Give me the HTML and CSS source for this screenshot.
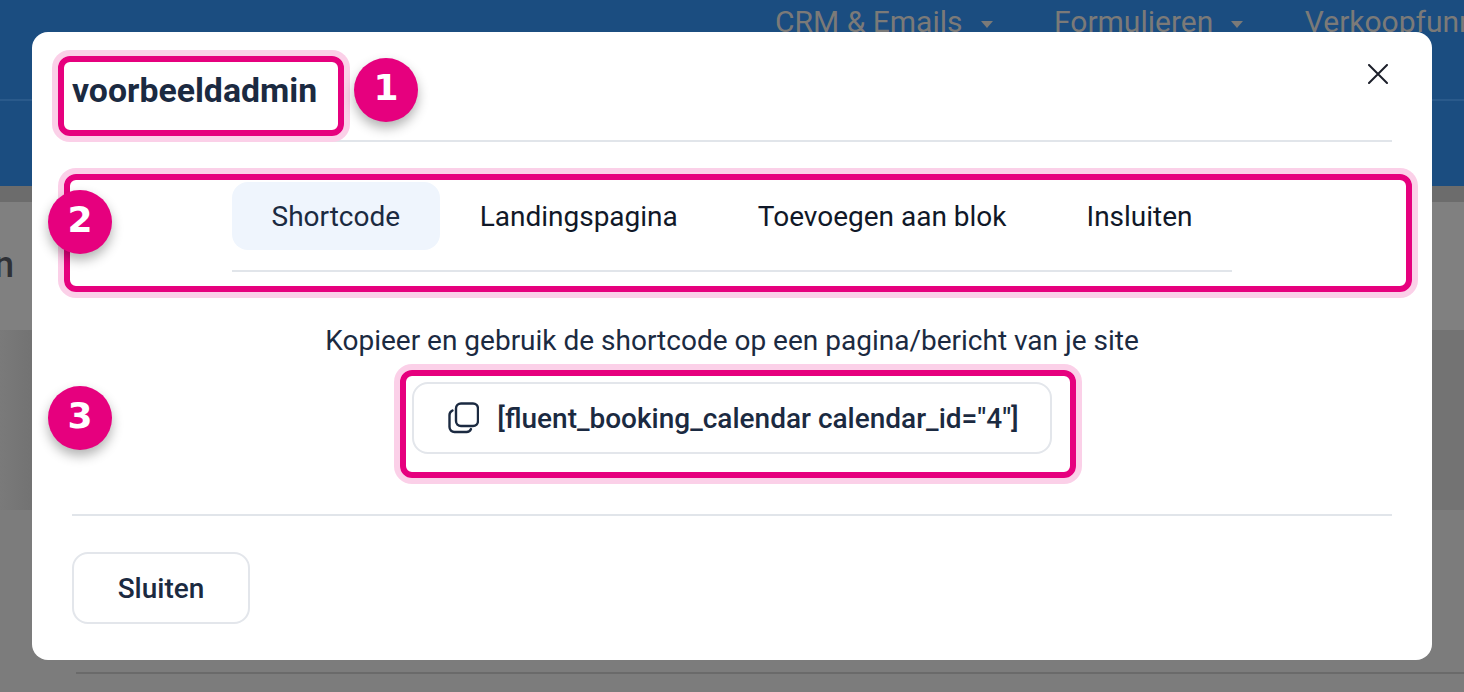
FILE: index.html
```html
<!DOCTYPE html>
<html lang="en">
<head>
  <meta charset="UTF-8" />
  <title>Shortcode modal</title>
  <link rel="stylesheet" href="styles.css">
</head>
<body>
  <div class="page">
    <div class="topbar">
      <nav class="main-nav">
        <span class="nav-item">CRM &amp; Emails <i class="caret"></i></span>
        <span class="nav-item">Formulieren <i class="caret"></i></span>
        <span class="nav-item">Verkoopfunnels</span>
      </nav>
      <div class="subnav"></div>
    </div>
    <div class="strip"></div>
    <div class="page-head"><span class="page-title">n</span></div>
    <div class="page-panel"></div>
    <div class="page-foot"><div class="foot-line"></div></div>
  </div>

  <div class="modal">
    <div class="modal-header">
      <h2 class="modal-title">voorbeeldadmin</h2>
      <button class="close-btn" aria-label="Sluiten">
        <svg width="20" height="20" viewBox="0 0 20 20" fill="none" stroke="#1c1f2a" stroke-width="2" stroke-linecap="round">
          <path d="M1 1 19 19M19 1 1 19" />
        </svg>
      </button>
    </div>

    <div class="tabs">
      <span class="tab active">Shortcode</span>
      <span class="tab">Landingspagina</span>
      <span class="tab">Toevoegen aan blok</span>
      <span class="tab">Insluiten</span>
    </div>

    <div class="tab-body">
      <p class="hint">Kopieer en gebruik de shortcode op een pagina/bericht van je site</p>
      <div class="code-box">
        <svg class="copy-icon" width="32" height="34" viewBox="0 0 32 34" fill="none" stroke="#1b2a41" stroke-width="2.4" stroke-linecap="round" stroke-linejoin="round">
          <rect x="9" y="2.500" width="22" height="22.500" rx="5" />
          <path d="M5.500 9.500C3.500 10.500 2.500 12 2.500 14V26a5 5 0 0 0 5 5H19a5 5 0 0 0 5-3" />
        </svg>
        <span>[fluent_booking_calendar calendar_id="4"]</span>
      </div>
    </div>

    <div class="modal-footer">
      <button class="close-action">Sluiten</button>
    </div>

    <!-- annotations on top of the modal -->
    <div class="mark mark-title"></div>
    <div class="mark mark-tabs"></div>
    <div class="mark mark-code"></div>
    <div class="badge badge-1">1</div>
    <div class="badge badge-2">2</div>
    <div class="badge badge-3">3</div>
  </div>
</body>
</html>
```

FILE: styles.css
```css
* {
  box-sizing: border-box;
  padding: 0;
  margin: 0;
}

body {
  font-family: Roboto, "Liberation Sans", sans-serif;
  background-color: #7f7f7f;
  color: #1b2a41;
  height: 692px;
  overflow: hidden;
}

.page {
  height: 692px;
  overflow: hidden;
}

.topbar {
  height: 186px;
  background-color: #1b4d80;
}

.main-nav {
  display: flex;
  align-items: flex-start;
  height: 101px;
  padding-left: 775px;
  gap: 61.500px;
  border-bottom: 2px solid #2a5a8b;
  white-space: nowrap;
}

.nav-item {
  font-size: 30px;
  line-height: 44px;
  color: #7b7a78;
  display: flex;
  align-items: center;
  gap: 18px;
}

.caret {
  width: 0;
  height: 0;
  border-left: 6px solid transparent;
  border-right: 6px solid transparent;
  border-top: 7px solid #7b7a78;
  margin-top: 4px;
}

.strip {
  height: 16px;
  background-color: #6c6c6c;
}

.page-head {
  height: 128px;
  background-color: #808080;
  overflow: hidden;
}

.page-title {
  display: block;
  margin-left: -6px;
  font-size: 36px;
  font-weight: 500;
  line-height: 126px;
  color: #2f3136;
}

.page-panel {
  height: 180px;
  background: linear-gradient(90deg, #7a7a7a 0, #737373 30px);
}

.page-foot {
  height: 182px;
  padding: 162px 0 0 76px;
  background-color: #7c7c7c;
}

.foot-line {
  height: 2px;
  background-color: #6a6a6a;
}

.modal {
  position: absolute;
  top: 32px;
  left: 32px;
  width: 1400px;
  height: 628px;
  padding: 0 40px;
  background-color: #fff;
  border-radius: 16px;
}

.modal-header {
  display: flex;
  justify-content: space-between;
  height: 110px;
  border-bottom: 2px solid #e1e5ea;
}

.modal-title {
  font-size: 33.800px;
  font-weight: 700;
  line-height: 38px;
  margin-top: 40px;
}

.close-btn {
  background: none;
  border: none;
  width: 20px;
  height: 20px;
  margin: 32px 4px 0 0;
  cursor: pointer;
}

.tabs {
  display: flex;
  width: 1000px;
  height: 90px;
  margin: 40px auto 0;
  padding-bottom: 20px;
  border-bottom: 2px solid #e1e5ea;
  white-space: nowrap;
}

.tab {
  height: 68px;
  padding: 0 40px;
  font-size: 28px;
  line-height: 70px;
  border-radius: 16px;
  color: #101828;
}

.tab.active {
  padding: 0 39.500px;
  background-color: #eff5fd;
  color: #1b2a41;
}

.tab-body {
  display: flex;
  flex-direction: column;
  align-items: center;
  height: 244px;
  padding-top: 52px;
  border-bottom: 2px solid #e1e5ea;
}

.hint {
  font-size: 28px;
  line-height: 34px;
}

.code-box {
  display: flex;
  align-items: center;
  justify-content: center;
  gap: 18px;
  width: 640px;
  height: 72px;
  margin-top: 24px;
  padding-left: 2px;
  border: 2px solid #e3e6eb;
  border-radius: 16px;
  font-size: 28px;
  font-weight: 500;
}

.modal-footer {
  padding-top: 36px;
}

.close-action {
  width: 178px;
  height: 72px;
  background-color: #fff;
  border: 2px solid #e3e6eb;
  border-radius: 16px;
  font-family: inherit;
  font-size: 28px;
  font-weight: 500;
  color: #1b2a41;
  cursor: pointer;
}

.mark {
  position: absolute;
  border: 6px solid #e6007e;
  border-radius: 12px;
  box-shadow: 0 0 0 6px #fbd0e8;
}

.mark-title {
  left: 26px;
  top: 24px;
  width: 286px;
  height: 80px;
}

.mark-tabs {
  left: 32px;
  top: 142px;
  width: 1348px;
  height: 118px;
}

.mark-code {
  left: 368px;
  top: 338px;
  width: 676px;
  height: 108px;
}

.badge {
  position: absolute;
  width: 64px;
  height: 64px;
  border-radius: 50%;
  background-color: #e6007e;
  color: #fff;
  font-family: "DejaVu Sans", sans-serif;
  font-size: 36px;
  font-weight: 700;
  line-height: 60px;
  text-align: center;
  box-shadow: 0 6px 12px rgba(0, 0, 0, 0.3);
}

.badge-1 {
  left: 322px;
  top: 26px;
}

.badge-2 {
  left: 16px;
  top: 158px;
}

.badge-3 {
  left: 16px;
  top: 354px;
}
```
